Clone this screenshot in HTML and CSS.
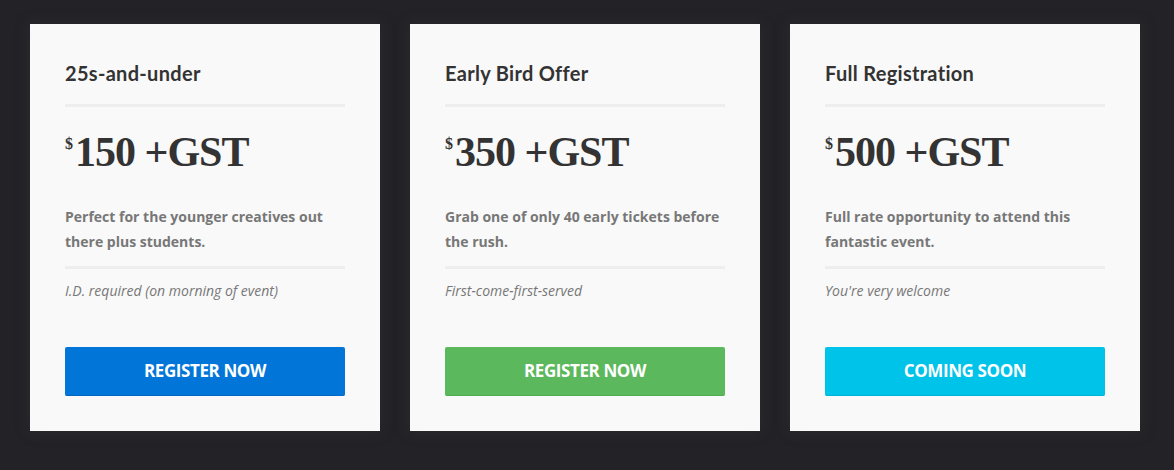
FILE: index.html
```html
<!DOCTYPE html>
<html lang="en">

<head>
    <meta charset="UTF-8">
    <meta name="viewport" content="width=device-width, initial-scale=1.0">
    <title>Tickets</title>
    <link rel="stylesheet" href="styles.css">
</head>

<body>
    <div class="tickets">
        <div class="ticket">
            <h3 class="ticket-name">25s-and-under</h3>
            <div class="price"><span class="dollar">$</span>150 +GST</div>
            <p class="desc">Perfect for the younger creatives out there plus students.</p>
            <p class="note">I.D. required (on morning of event)</p>
            <a href="#" class="btn btn-blue">REGISTER NOW</a>
        </div>
        <div class="ticket">
            <h3 class="ticket-name">Early Bird Offer</h3>
            <div class="price"><span class="dollar">$</span>350 +GST</div>
            <p class="desc">Grab one of only 40 early tickets before the rush.</p>
            <p class="note">First-come-first-served</p>
            <a href="#" class="btn btn-green">REGISTER NOW</a>
        </div>
        <div class="ticket">
            <h3 class="ticket-name">Full Registration</h3>
            <div class="price"><span class="dollar">$</span>500 +GST</div>
            <p class="desc">Full rate opportunity to attend this fantastic event.</p>
            <p class="note">You're very welcome</p>
            <a href="#" class="btn btn-cyan">COMING SOON</a>
        </div>
    </div>
</body>

</html>
```

FILE: styles.css
```css
* {
    margin: 0;
    padding: 0;
    box-sizing: border-box;
}

body {
    background-color: #232327;
    font-family: "Open Sans", sans-serif;
}

.tickets {
    display: grid;
    grid-template-columns: repeat(3, 350px);
    gap: 30px;
    padding: 24px 30px;
}

.ticket {
    background-color: #f9f9f9;
    height: 407px;
    padding: 37px 35px 35px;
    box-shadow: 0 0 14px rgba(60, 60, 66, 0.35);
}

.ticket-name {
    font-family: "Lato", sans-serif;
    font-weight: 700;
    font-size: 20px;
    line-height: 24px;
    letter-spacing: 0.3px;
    color: #333;
    padding-bottom: 19px;
    border-bottom: 3px solid #eee;
}

.price {
    font-family: "Liberation Serif", serif;
    font-weight: bold;
    font-size: 42px;
    line-height: 42px;
    height: 42px;
    letter-spacing: -1px;
    color: #333;
    margin-top: 24px;
}

.dollar {
    font-size: 16px;
    line-height: 26px;
    vertical-align: top;
    margin-right: 2px;
    letter-spacing: 0;
}

.desc {
    font-weight: bold;
    font-size: 14px;
    line-height: 25px;
    color: #777;
    margin-top: 31px;
    padding-bottom: 12px;
    border-bottom: 3px solid #eee;
}

.note {
    font-style: italic;
    font-size: 14px;
    line-height: 20px;
    color: #777;
    margin-top: 12px;
}

.btn {
    display: block;
    margin-top: 46px;
    height: 49px;
    line-height: 48px;
    text-align: center;
    color: white;
    font-weight: bold;
    font-size: 17px;
    letter-spacing: -0.4px;
    text-decoration: none;
    border-radius: 2px;
}

.btn-blue {
    background-color: #0275d8;
    border-bottom: 1px solid #0267bf;
}

.btn-green {
    background-color: #5cb85c;
    border-bottom: 1px solid #4cae4c;
}

.btn-cyan {
    background-color: #00c3ea;
    border-bottom: 1px solid #00b3d8;
}
```
